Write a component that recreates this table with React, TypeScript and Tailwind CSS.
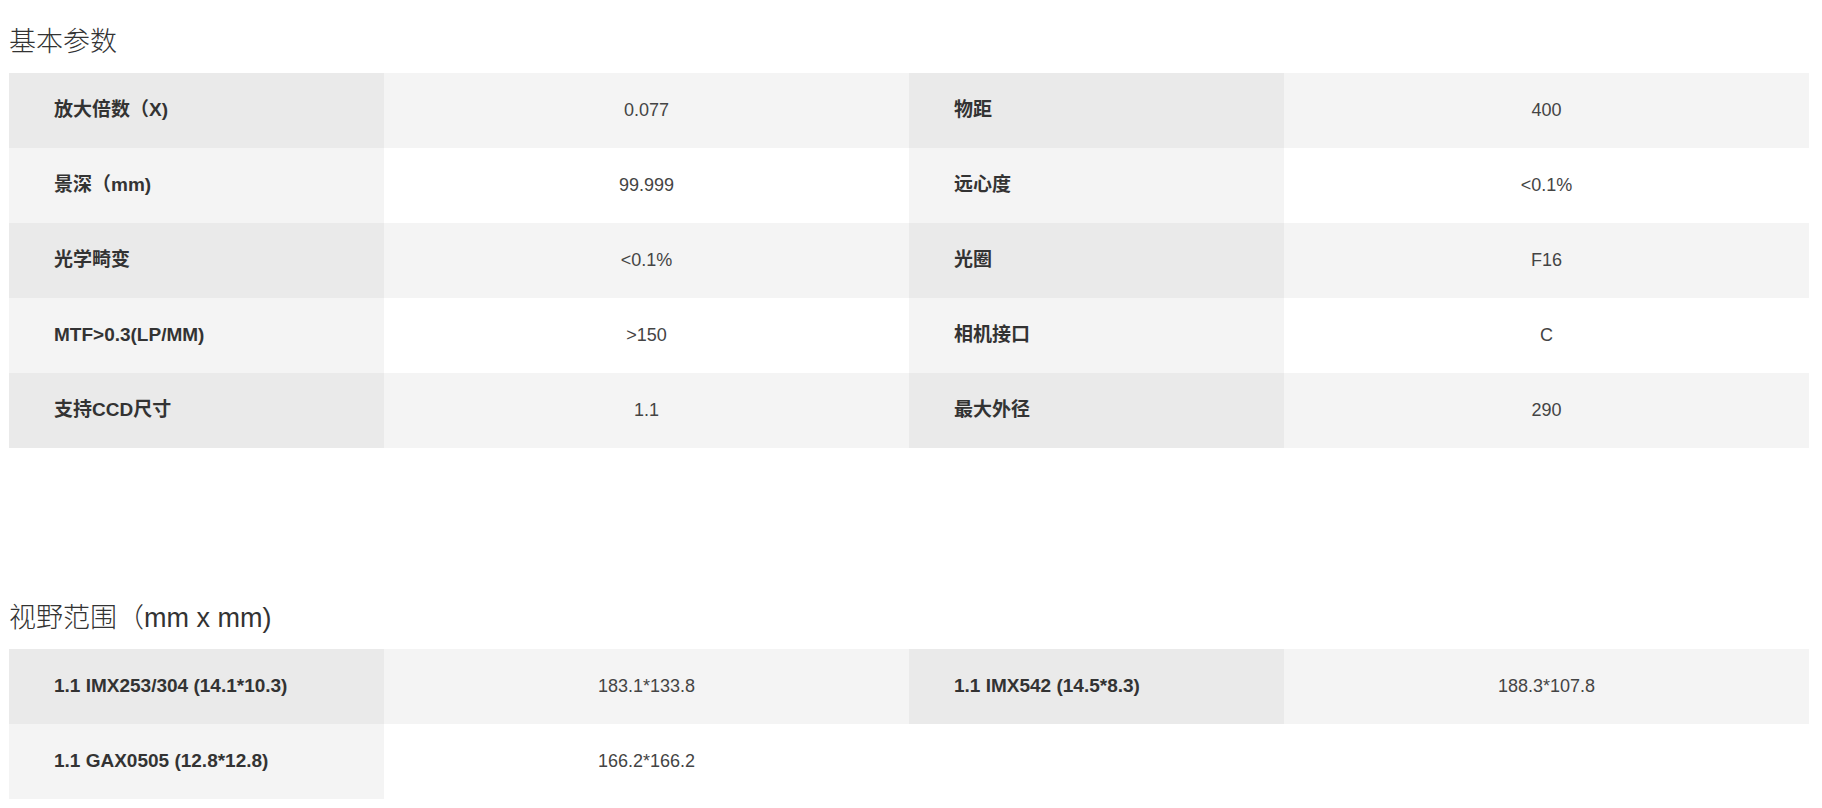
import React from "react";

type Row = { label: string; value: string; label2?: string; value2?: string };

const basic: Row[] = [
  { label: "放大倍数（X)", value: "0.077", label2: "物距", value2: "400" },
  { label: "景深（mm)", value: "99.999", label2: "远心度", value2: "<0.1%" },
  { label: "光学畸变", value: "<0.1%", label2: "光圈", value2: "F16" },
  { label: "MTF>0.3(LP/MM)", value: ">150", label2: "相机接口", value2: "C" },
  { label: "支持CCD尺寸", value: "1.1", label2: "最大外径", value2: "290" },
];

const fov: Row[] = [
  { label: "1.1 IMX253/304 (14.1*10.3)", value: "183.1*133.8", label2: "1.1 IMX542 (14.5*8.3)", value2: "188.3*107.8" },
  { label: "1.1 GAX0505 (12.8*12.8)", value: "166.2*166.2" },
];

const font = "[font-family:'Liberation_Sans','Noto_Sans_CJK_SC',sans-serif]";

function SpecTable({ rows }: { rows: Row[] }) {
  return (
    <div className="w-[1800px]">
      {rows.map((r, i) => {
        const odd = i % 2 === 0;
        const labelBg = odd ? "bg-[#eaeaea]" : "bg-[#f4f4f4]";
        const valueBg = odd ? "bg-[#f4f4f4]" : "bg-white";
        return (
          <div key={i} className="flex h-[75px]">
            <div className={`w-[375px] flex items-center pl-[45px] text-[19px] font-bold text-[#333] ${labelBg}`}>
              {r.label}
            </div>
            <div className={`w-[525px] flex items-center justify-center text-[18px] text-[#444] ${valueBg}`}>
              {r.value}
            </div>
            {r.label2 !== undefined && (
              <>
                <div className={`w-[375px] flex items-center pl-[45px] text-[19px] font-bold text-[#333] ${labelBg}`}>
                  {r.label2}
                </div>
                <div className={`w-[525px] flex items-center justify-center text-[18px] text-[#444] ${valueBg}`}>
                  {r.value2}
                </div>
              </>
            )}
          </div>
        );
      })}
    </div>
  );
}

export default function App() {
  return (
    <main className={`min-h-screen bg-white pl-[9px] pt-[24px] ${font}`}>
      <h2 className="h-[36px] leading-[36px] text-[27px] font-light text-[#333] mb-[13px]">基本参数</h2>
      <SpecTable rows={basic} />

      <h2 className="h-[36px] leading-[36px] text-[27px] font-light text-[#333] mt-[152px] mb-[13px]">
        视野范围（mm x mm)
      </h2>
      <SpecTable rows={fov} />
    </main>
  );
}
